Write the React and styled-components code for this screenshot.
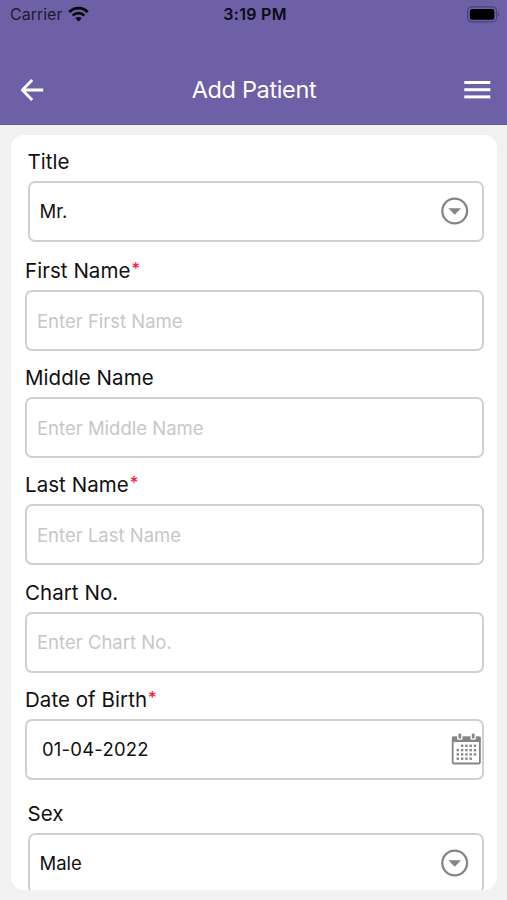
import React from 'react'
import styled, { createGlobalStyle } from 'styled-components'

const GlobalStyle = createGlobalStyle`
  * {
    box-sizing: border-box;
  }

  body {
    margin: 0;
    background: #f1f1f1;
    font-family: Inter, 'Liberation Sans', sans-serif;
  }
`

const Screen = styled.div`
  display: flex;
  flex-direction: column;
  width: 507px;
  height: 900px;
  overflow: hidden;
  background: #f1f1f1;
`

const Header = styled.header`
  flex: none;
  height: 125px;
  background: #6d60a7;
  border-bottom: 1px solid #6457a0;
`

const StatusBar = styled.div`
  display: grid;
  grid-template-columns: 1fr auto 1fr;
  align-items: center;
  height: 28px;
  padding: 0 7px 0 10px;
  color: #0c0a14;
  font-size: 16px;
  line-height: 28px;
`

const Carrier = styled.div`
  display: flex;
  align-items: center;
  gap: 6px;
  color: #1e1a30;
`

const Clock = styled.div`
  font-weight: 600;
  letter-spacing: 0.3px;
`

const Battery = styled.div`
  display: flex;
  justify-content: flex-end;
`

const NavBar = styled.nav`
  display: flex;
  align-items: center;
  justify-content: space-between;
  height: 60px;
  margin-top: 32px;
  padding: 0 16px 0 20px;
`

const IconButton = styled.button`
  display: flex;
  padding: 0;
  border: none;
  background: none;
  cursor: pointer;
`

const PageTitle = styled.h1`
  margin: 0;
  padding-bottom: 2px;
  color: #fff;
  font-size: 23.5px;
  font-weight: 400;
  letter-spacing: -0.35px;
`

const Card = styled.main`
  flex: none;
  height: 755px;
  margin: 10px 10px 0 11px;
  padding: 15px 13.5px 0 14px;
  overflow: hidden;
  background: #fff;
  border-radius: 13px;
`

const Field = styled.div`
  margin-bottom: ${props => props.$gap || 15.2}px;
  padding-left: ${props => (props.$inset ? 2.5 : 0)}px;
`

const Label = styled.label`
  display: block;
  height: 24px;
  margin-bottom: 7px;
  color: #111;
  font-size: 20.5px;
  line-height: 24px;
  letter-spacing: 0.05px;
  white-space: nowrap;
`

const Required = styled.span`
  margin-left: 1px;
  color: #f5143c;
  font-size: 16.5px;
  font-weight: 500;
  line-height: 1;
  vertical-align: 4px;
`

const Box = styled.div`
  display: flex;
  align-items: center;
  justify-content: space-between;
  height: 61px;
  padding: 0 ${props => props.$end || 9}px 1px ${props => props.$start || 10}px;
  border: 2px solid #d0d0d0;
  border-radius: 7px;
  color: #111;
  font-size: 18.5px;
`

const Input = styled.input`
  width: 100%;
  padding: 1px 0 0;
  border: none;
  outline: none;
  background: none;
  color: #111;
  font: inherit;

  &::placeholder {
    color: #c7c7c7;
    opacity: 1;
  }
`

const DateValue = styled.span`
  letter-spacing: 0.2px;
`

const WifiIcon = () => (
  <svg width="21" height="16" viewBox="0 0 21 16" fill="none" stroke="#050409" strokeWidth="2.8">
    <path d="M1.3 6.1C6.4 0.9 14.6 0.9 19.7 6.1" />
    <path d="M4.7 9.6C7.9 6.4 13.1 6.4 16.3 9.6" />
    <path d="M7.4 12.2C9.2 10.5 11.8 10.5 13.6 12.2L10.5 15.4Z" fill="#050409" stroke="none" />
  </svg>
)

const BatteryIcon = () => (
  <svg width="33" height="17" viewBox="0 0 33 17">
    <rect x="0.6" y="0.9" width="29" height="15" rx="4.2" fill="none" stroke="#4b4275" strokeWidth="1.2" />
    <rect x="2.8" y="3" width="24.6" height="10.8" rx="2.4" fill="#000" />
    <path d="M31 6.2C32.6 6.8 32.6 10 31 10.6Z" fill="#4b4275" />
  </svg>
)

const BackIcon = () => (
  <svg width="24" height="24" viewBox="0 0 24 24" fill="none" stroke="#fff" strokeWidth="2.8">
    <path d="M12.2 2L2.3 12L12.2 22M2.3 12H23.2" strokeLinejoin="round" />
  </svg>
)

const MenuIcon = () => (
  <svg width="27" height="20" viewBox="0 0 27 20" fill="#fff">
    <rect x="0.3" y="1" width="26" height="3" />
    <rect x="0.3" y="8.2" width="26" height="3" />
    <rect x="0.3" y="15.4" width="26" height="3" />
  </svg>
)

const DropdownIcon = () => (
  <svg width="28" height="28" viewBox="0 0 28 28">
    <circle cx="13.7" cy="14" r="12.4" fill="none" stroke="#858585" strokeWidth="2.3" />
    <path d="M7.4 11.2H20L13.7 17.8Z" fill="#858585" />
  </svg>
)

// 5x4 grid of days, first and last cells left empty
const days = Array.from({ length: 20 }, (_, i) => i).filter(i => i !== 0 && i !== 19)

const CalendarIcon = () => (
  <svg width="30" height="32" viewBox="0 0 30 32">
    <rect x="1.7" y="4.5" width="27.2" height="26" rx="1.2" fill="#fff" stroke="#858585" strokeWidth="1.8" />
    <path d="M1 3.6H29.6V9H1Z" fill="#858585" />
    {[8.8, 22.2].map(x => (
      <g key={x}>
        <rect x={x - 2.7} y="0" width="5.4" height="6.8" rx="1.5" fill="#fff" />
        <rect x={x - 1.4} y="0.4" width="2.8" height="5.2" rx="1.2" fill="#858585" />
      </g>
    ))}
    {days.map(i => (
      <rect
        key={i}
        x={5.6 + (i % 5) * 4.3}
        y={11.6 + Math.floor(i / 5) * 4.3}
        width="2.4"
        height="2.4"
        fill="#858585"
      />
    ))}
  </svg>
)

const SelectField = ({ label, value, gap }) => (
  <Field $inset $gap={gap}>
    <Label>{label}</Label>
    <Box $end={13}>
      <span>{value}</span>
      <DropdownIcon />
    </Box>
  </Field>
)

const TextField = ({ label, required }) => (
  <Field>
    <Label>
      {label}
      {required && <Required>*</Required>}
    </Label>
    <Box>
      <Input placeholder={`Enter ${label}`} />
    </Box>
  </Field>
)

const App = () => {
  return (
    <Screen>
      <GlobalStyle />
      <Header>
        <StatusBar>
          <Carrier>
            Carrier
            <WifiIcon />
          </Carrier>
          <Clock>3:19 PM</Clock>
          <Battery>
            <BatteryIcon />
          </Battery>
        </StatusBar>
        <NavBar>
          <IconButton aria-label="Back">
            <BackIcon />
          </IconButton>
          <PageTitle>Add Patient</PageTitle>
          <IconButton aria-label="Menu">
            <MenuIcon />
          </IconButton>
        </NavBar>
      </Header>

      <Card>
        <SelectField label="Title" value="Mr." gap={17} />
        <TextField label="First Name" required />
        <TextField label="Middle Name" />
        <TextField label="Last Name" required />
        <TextField label="Chart No." />
        <Field $gap={22}>
          <Label>
            Date of Birth<Required>*</Required>
          </Label>
          <Box $start={15} $end={0.1}>
            <DateValue>01-04-2022</DateValue>
            <CalendarIcon />
          </Box>
        </Field>
        <SelectField label="Sex" value="Male" />
      </Card>
    </Screen>
  )
}

export default App
